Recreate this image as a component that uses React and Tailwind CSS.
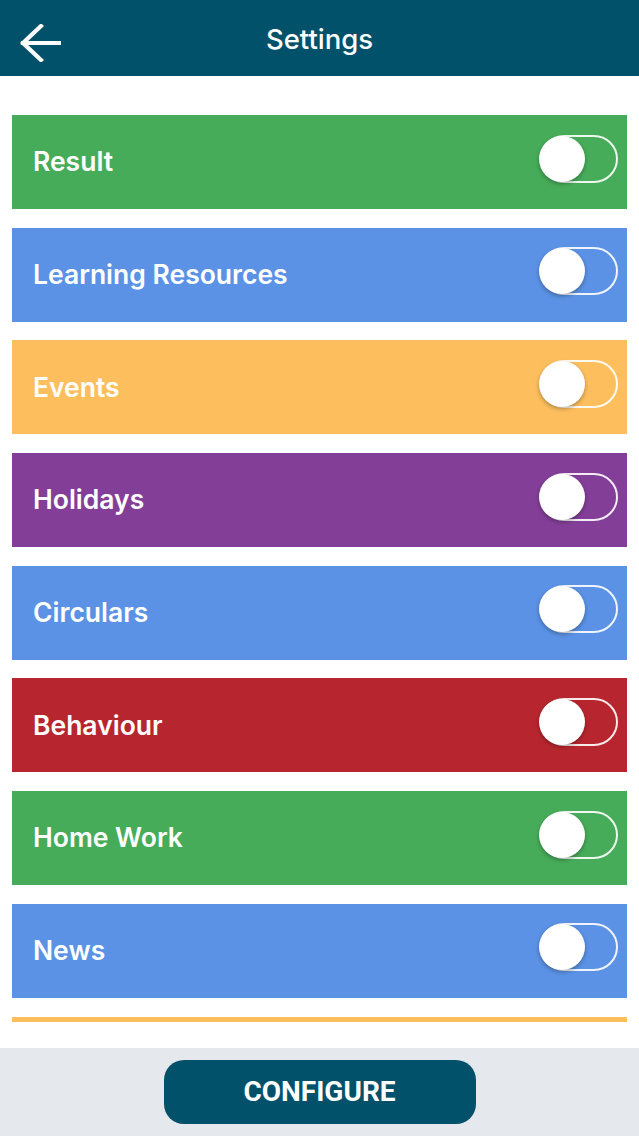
import React from "react";

const rows = [
  { label: "Result", color: "bg-[#47ac5a]" },
  { label: "Learning Resources", color: "bg-[#5b92e5]" },
  { label: "Events", color: "bg-[#fdbf5e]" },
  { label: "Holidays", color: "bg-[#833f98]" },
  { label: "Circulars", color: "bg-[#5b92e5]" },
  { label: "Behaviour", color: "bg-[#b7262e]" },
  { label: "Home Work", color: "bg-[#47ac5a]" },
  { label: "News", color: "bg-[#5b92e5]" },
];

function Toggle() {
  return (
    <div className="relative w-[78px] h-[48px] rounded-full border-2 border-white/90 mb-[7px] shrink-0">
      <div className="absolute left-[-3px] top-[-1px] w-[46px] h-[46px] rounded-full bg-white shadow-[0_2px_4px_rgba(0,0,0,0.3)]" />
    </div>
  );
}

export default function App() {
  return (
    <div className="w-[639px] h-[1136px] flex flex-col bg-white" style={{ fontFamily: 'Inter, "Liberation Sans", Arial, sans-serif' }}>
      <header className="h-[76px] bg-[#02516a] flex items-center relative shrink-0">
        <svg className="absolute left-[19px] top-[24px]" width="42" height="38" viewBox="0 0 42 38" fill="none">
          <path d="M22 2 L4 19 L22 36 M4 19 H41" stroke="white" strokeWidth="4.2" strokeLinecap="square" strokeLinejoin="miter" />
        </svg>
        <h1 className="w-full text-center text-white text-[27.5px] font-medium mt-[4px]">Settings</h1>
      </header>
      <main className="h-[972px] flex flex-col shrink-0">
        <div className="h-[946px] overflow-hidden pt-[39px] px-[12px] flex flex-col gap-[18.7px]">
          {rows.map((r) => (
            <div key={r.label} className={`${r.color} h-[94px] shrink-0 flex items-center justify-between pl-[21px] pr-[9px]`}>
              <span className="text-white text-[26.5px] font-semibold">{r.label}</span>
              <Toggle />
            </div>
          ))}
          <div className="bg-[#fdbf5e] h-[94px] shrink-0" />
        </div>
      </main>
      <footer className="h-[88px] bg-[#e5e8ec] flex items-center justify-center shrink-0">
        <button className="w-[312px] h-[64px] rounded-[20px] bg-[#02516a] text-white text-[28px] leading-none font-bold" style={{ fontFamily: 'Roboto, "Liberation Sans", Arial, sans-serif' }}>
          CONFIGURE
        </button>
      </footer>
    </div>
  );
}
